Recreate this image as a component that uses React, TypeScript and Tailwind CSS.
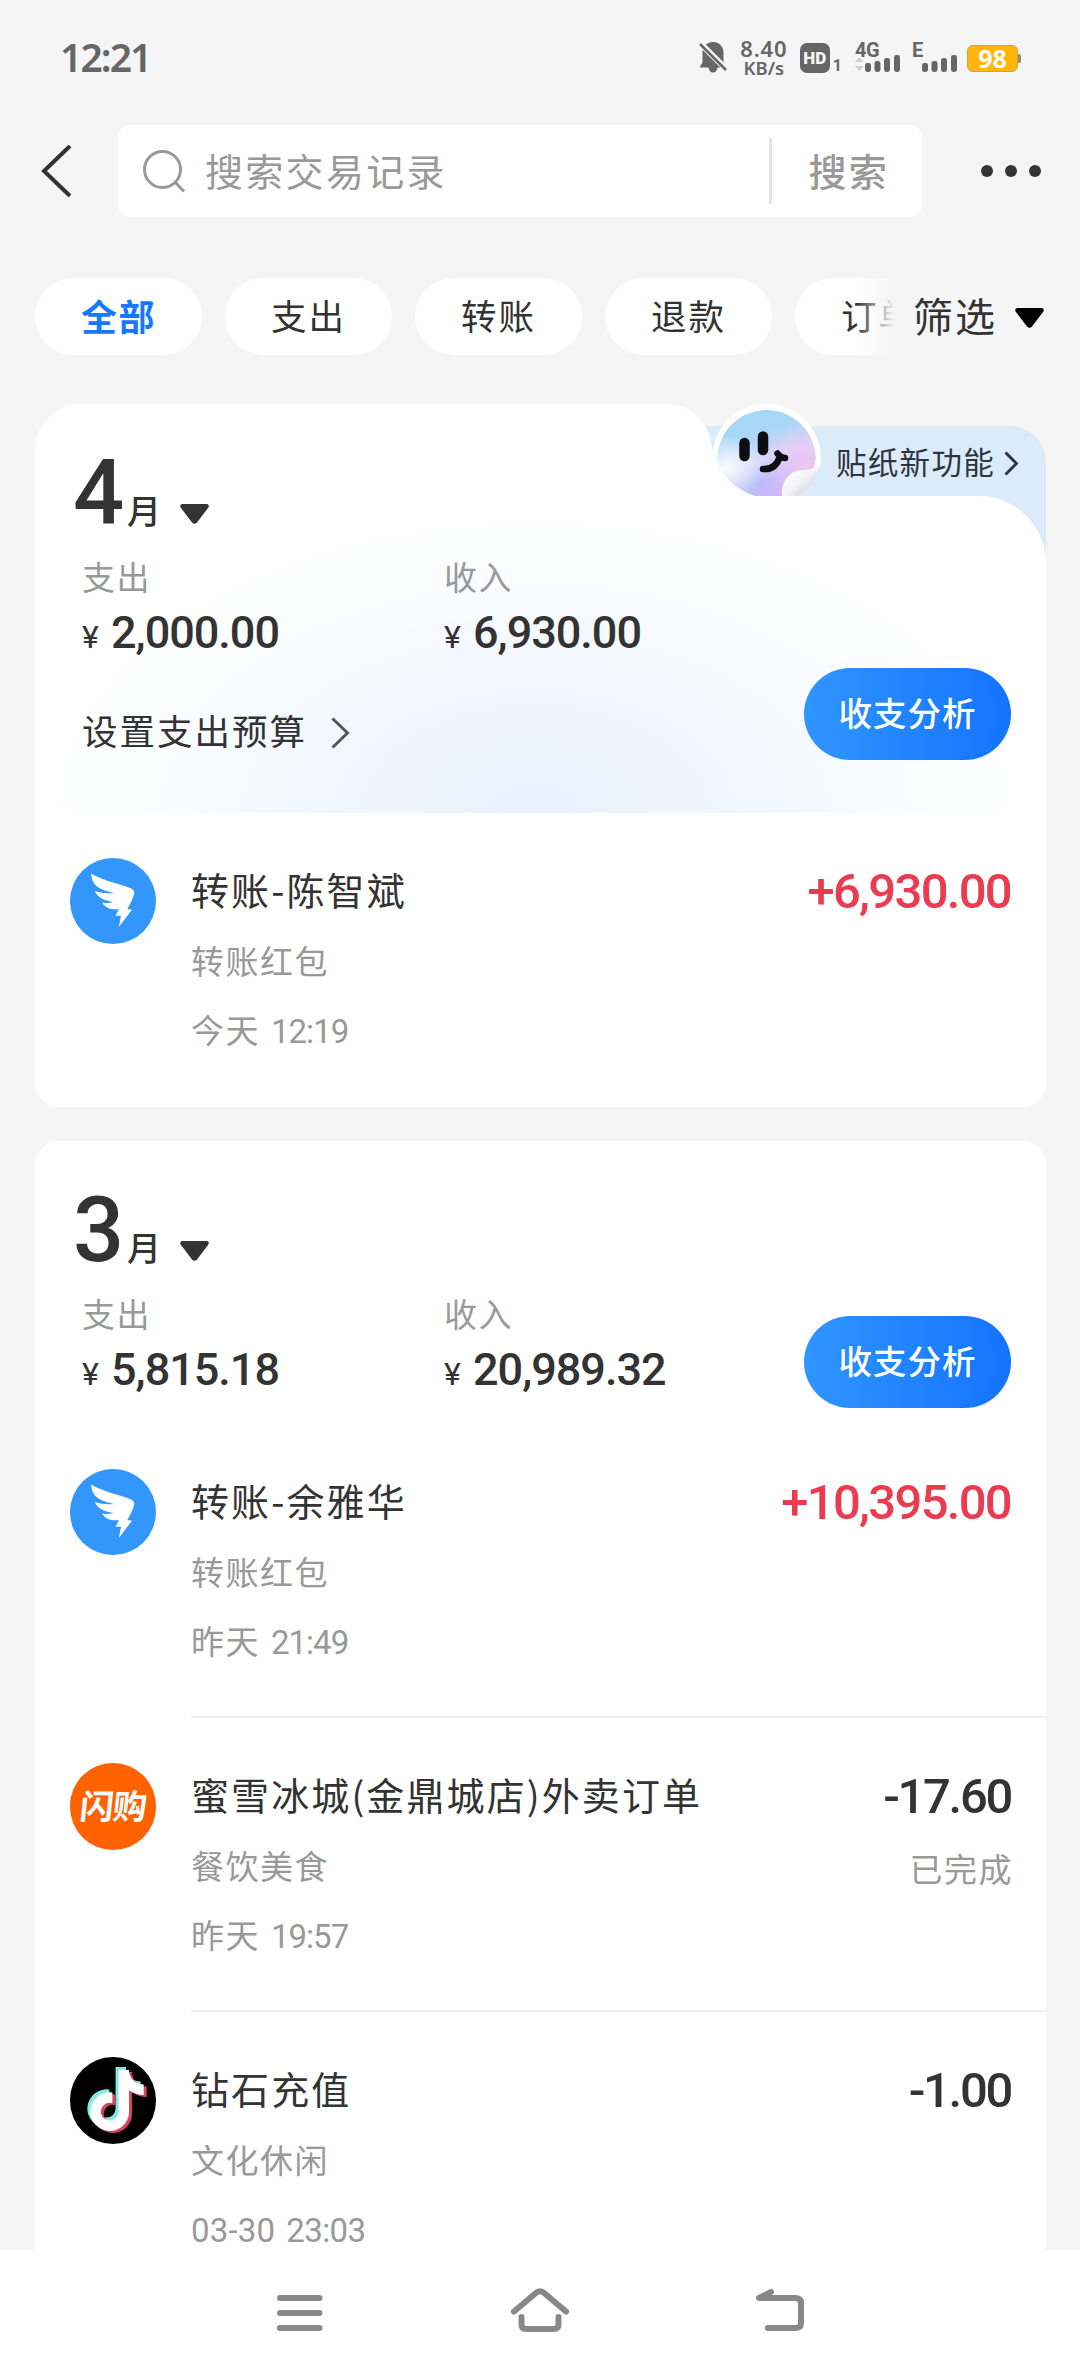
import React from 'react'
import { FaTiktok } from 'react-icons/fa6'

type Brand = 'dingtalk' | 'shangou' | 'douyin'

interface Bill {
  brand: Brand
  title: string
  category: string
  day: string
  time: string
  amount: string
  income?: boolean
  status?: string
}

const FILTERS = ['全部', '支出', '转账', '退款', '订单']

const APRIL: Bill[] = [
  { brand: 'dingtalk', title: '转账-陈智斌', category: '转账红包', day: '今天', time: '12:19', amount: '+6,930.00', income: true },
]

const MARCH: Bill[] = [
  { brand: 'dingtalk', title: '转账-余雅华', category: '转账红包', day: '昨天', time: '21:49', amount: '+10,395.00', income: true },
  { brand: 'shangou', title: '蜜雪冰城(金鼎城店)外卖订单', category: '餐饮美食', day: '昨天', time: '19:57', amount: '-17.60', status: '已完成' },
  { brand: 'douyin', title: '钻石充值', category: '文化休闲', day: '03-30', time: '23:03', amount: '-1.00' },
]

function Signal(): React.JSX.Element {
  return (
    <svg width="35" height="17" viewBox="0 0 35 17" fill="#666">
      <rect x="0" y="8" width="6" height="9" rx="2.4" />
      <rect x="9.5" y="6" width="6" height="11" rx="2.4" />
      <rect x="19" y="3" width="6" height="14" rx="2.4" />
      <rect x="29" y="0" width="6" height="17" rx="2.4" />
    </svg>
  )
}

function StatusBar(): React.JSX.Element {
  return (
    <div className="flex h-[114px] shrink-0 items-center pl-[60px] pr-[59px] text-[#666]">
      <span className="mb-[2px] font-['Noto_Sans','Roboto',sans-serif] text-[39px] font-semibold leading-none tracking-[-1.9px]">12:21</span>
      <div className="ml-auto flex h-[34px] items-end">
        <svg className="mb-px" width="28" height="32" viewBox="0 0 28 32">
          <path d="M14 1C20 1 24.500 5.500 24.500 11.500V21C24.500 23 27 24 27 26.500H18.500C18 29.500 16.500 31.500 14 31.500S10 29.500 9.500 26.500H1C1 24 3.500 23 3.500 21V11.500C3.500 5.500 8 1 14 1Z" fill="#666" />
          <path d="M0 1L28 29" stroke="#f5f5f5" strokeWidth="6" />
          <path d="M1 3L27 29" stroke="#666" strokeWidth="2.500" />
        </svg>
        <div className="mb-[-3px] ml-[13px] flex w-[48px] flex-col items-center font-['Noto_Sans',sans-serif] font-semibold">
          <span className="text-[22px] leading-[20px] tracking-[0.8px]">8.40</span>
          <span className="text-[18.5px] leading-[19px]">KB/s</span>
        </div>
        <span className="mb-px ml-[12px] flex h-[30px] w-[30px] items-center justify-center rounded-[7px] bg-[#666] font-['Roboto',sans-serif] text-[17px] font-black leading-none text-[#f5f5f5]">HD</span>
        <span className="ml-[3px] font-['Roboto',sans-serif] text-[16px] font-bold leading-[17px]">1</span>
        <div className="relative ml-[13px] flex h-[34px] w-[45px] items-end justify-end pb-[2px]">
          <span className="absolute left-0 top-[2px] font-['Roboto',sans-serif] text-[20px] font-bold leading-[16px] tracking-[-0.5px]">4G</span>
          <svg className="absolute bottom-[3px] left-0" width="9" height="14" viewBox="0 0 9 14" fill="#d0d0d0">
            <path d="M4.500 0L9 5H0ZM4.500 14L0 9H9Z" />
          </svg>
          <Signal />
        </div>
        <div className="relative ml-[12px] flex h-[34px] w-[45px] items-end justify-end pb-[2px]">
          <span className="absolute left-0 top-[2px] font-['Roboto',sans-serif] text-[20px] font-bold leading-[16px]">E</span>
          <Signal />
        </div>
        <span className="mb-[2px] ml-[10px] flex h-[27px] w-[51px] items-center justify-center rounded-[6px] border border-[#c9a24b] bg-[#ffb60a] font-['Noto_Sans',sans-serif] text-[25px] font-bold leading-none text-white">98</span>
        <span className="mb-[11px] h-[9px] w-[3px] rounded-r-[2px] bg-[#a08a5a]" />
      </div>
    </div>
  )
}

function SearchHeader(): React.JSX.Element {
  return (
    <div className="flex h-[114px] shrink-0 items-center pl-[40px]">
      <svg width="32" height="52" viewBox="0 0 32 52" fill="none">
        <path d="M30 1L4 26L30 51" stroke="#333" strokeWidth="4" />
      </svg>
      <div className="ml-[46px] flex h-[92px] w-[804px] items-center rounded-[13px] bg-white">
        <svg className="ml-[25px]" width="43" height="43" viewBox="0 0 43 43" fill="none" stroke="#999" strokeWidth="3">
          <circle cx="19.500" cy="19.500" r="18" />
          <path d="M32 32L41 41.500" />
        </svg>
        <span className="ml-[19px] pt-[3px] text-[38px] leading-[60px] tracking-[2.3px] text-[#999]">搜索交易记录</span>
        <span className="ml-auto h-[66px] w-[3px] bg-[#e5e5e5]" />
        <span className="ml-[36px] mr-[33px] pt-[4px] text-[38px] font-medium leading-[60px] tracking-[2.3px] text-[#999]">搜索</span>
      </div>
      <div className="ml-[59px] flex gap-[12px]">
        <i className="h-[12px] w-[12px] rounded-full bg-[#333]" />
        <i className="h-[12px] w-[12px] rounded-full bg-[#333]" />
        <i className="h-[12px] w-[12px] rounded-full bg-[#333]" />
      </div>
    </div>
  )
}

function Triangle({ className }: { className: string }): React.JSX.Element {
  return (
    <svg className={className} width="29" height="20" viewBox="0 0 29 20" fill="currentColor">
      <path d="M2 0H27Q30 1 28 4L17 18.500Q14.500 21 12 18.500L1 4Q-1 1 2 0Z" />
    </svg>
  )
}

function FilterBar(): React.JSX.Element {
  return (
    <div className="mt-[50px] flex h-[77px] shrink-0 items-center pl-[35px]">
      <div className="relative flex w-[860px] gap-[23px] overflow-hidden">
        {FILTERS.map((name, i) => (
          <span
            key={name}
            className={
              i === 0
                ? 'flex h-[77px] w-[167px] shrink-0 items-center justify-center rounded-full bg-white pt-[5px] text-[36px] font-bold tracking-[1.5px] text-[#1677ff]'
                : 'flex h-[77px] w-[167px] shrink-0 items-center justify-center rounded-full bg-white pt-[5px] text-[35.5px] tracking-[2px] text-[#333]'
            }
          >
            {name}
          </span>
        ))}
        <span className="absolute right-0 top-0 h-full w-[40px] bg-linear-to-r from-[#f5f5f5]/0 to-[#f5f5f5]" />
      </div>
      <span className="ml-[18px] pt-[5px] text-[40px] tracking-[2px] text-[#333]">筛选</span>
      <Triangle className="ml-[18px] mt-[2px] text-black" />
    </div>
  )
}

function StickerFace(): React.JSX.Element {
  return (
    <svg className="absolute left-[677px] top-0" width="112" height="92" viewBox="0 0 112 92">
      <defs>
        <linearGradient id="foil" x1="0.25" y1="0" x2="0.6" y2="1">
          <stop offset="0" stopColor="#a2daf3" />
          <stop offset="0.3" stopColor="#abd6f8" />
          <stop offset="0.58" stopColor="#d5d8fa" />
          <stop offset="0.8" stopColor="#b7bef9" />
          <stop offset="1" stopColor="#cbb6f6" />
        </linearGradient>
        <radialGradient id="pink" cx="0.9" cy="0.65" r="0.5">
          <stop offset="0" stopColor="#f0c6f2" />
          <stop offset="1" stopColor="#f0c6f2" stopOpacity="0" />
        </radialGradient>
        <radialGradient id="sheen" cx="0.08" cy="0.68" r="0.4">
          <stop offset="0" stopColor="#fff" stopOpacity="0.9" />
          <stop offset="1" stopColor="#fff" stopOpacity="0" />
        </radialGradient>
        <linearGradient id="curl" x1="0.1" y1="0.2" x2="0.8" y2="0.9">
          <stop offset="0" stopColor="#fff" />
          <stop offset="0.5" stopColor="#f4f4f8" />
          <stop offset="1" stopColor="#cfd4e2" />
        </linearGradient>
      </defs>
      <path d="M0 48H40V92H0Z" fill="#fff" />
      <path d="M54.500 0A54.500 54.500 0 0 1 109 54.500Q109 62 106 66L86 92H20Q1 78 0 54.500A54.500 54.500 0 0 1 54.500 0Z" fill="#fff" />
      <g>
        <path d="M54.500 6A49 49 0 0 1 103.500 55L101 68L70 92H43Q12 81 5.500 55A49 49 0 0 1 54.500 6Z" fill="url(#foil)" />
        <path d="M54.500 6A49 49 0 0 1 103.500 55L101 68L70 92H43Q12 81 5.500 55A49 49 0 0 1 54.500 6Z" fill="url(#pink)" />
        <path d="M54.500 6A49 49 0 0 1 103.500 55L101 68L70 92H43Q12 81 5.500 55A49 49 0 0 1 54.500 6Z" fill="url(#sheen)" />
      </g>
      <path d="M70 92C69 76 78 66 92 66Q102 66 108 60Q104 78 86 92Z" fill="url(#curl)" />
      <g stroke="#0b0f12" strokeLinecap="round" fill="none">
        <path d="M32.500 39V52M51 32.500V46" strokeWidth="10.500" />
        <path d="M51 65Q64 66 68 52" strokeWidth="6.500" />
        <path d="M65.500 49.500Q68 54 73 54" strokeWidth="6.500" />
      </g>
    </svg>
  )
}

function BrandIcon({ brand }: { brand: Brand }): React.JSX.Element {
  if (brand === 'shangou') {
    return (
      <span className="flex h-[87px] w-[86px] items-center justify-center rounded-full bg-[#ff6200]">
        <span className="-skew-x-6 text-[34px] font-bold leading-none tracking-[-1px] text-white">闪购</span>
      </span>
    )
  }
  if (brand === 'douyin') {
    return (
      <span className="relative block h-[87px] w-[86px] rounded-full bg-black">
        <FaTiktok className="absolute left-[17px] top-[10px] h-[61px] w-[54px] text-[#7fe9e2]" />
        <FaTiktok className="absolute left-[23px] top-[15px] h-[61px] w-[54px] text-[#d9415f]" />
        <FaTiktok className="absolute left-[20px] top-[12.5px] h-[61px] w-[54px] text-white" />
      </span>
    )
  }
  return (
    <svg width="86" height="86" viewBox="0 0 86 86">
      <circle cx="43" cy="43" r="43" fill="#3296fa" />
      <path
        d="M21 15.500C33 22.500 48 25.500 60 30C63.500 31.500 65 33 64 36.500C62.500 41.500 60 46.500 57.300 51L62 51.700L48.800 69L51 57.800H45.500L49 51C42 52 35.500 50.500 32 44.500C36 45.500 40 45 43.500 43.800C36 43 28 40.500 24.700 33C31 35 37 35.500 44 35C34 32.500 22.500 30 21.300 17Z"
        fill="#fff"
      />
    </svg>
  )
}

function BillRow({ bill, divider }: { bill: Bill; divider: boolean }): React.JSX.Element {
  return (
    <div className="flex h-[294px] shrink-0 pl-[35px]">
      <div className="mt-[45px] w-[86px] shrink-0">
        <BrandIcon brand={bill.brand} />
      </div>
      <div className={divider ? 'ml-[35px] flex flex-1 justify-between border-b-2 border-[#eee] pr-[35px] pt-[48px]' : 'ml-[35px] flex flex-1 justify-between pr-[35px] pt-[48px]'}>
        <div className="flex flex-col">
          <span className="font-['Noto_Sans_CJK_SC',sans-serif] text-[38px] leading-[56px] tracking-[2.1px] text-[#333]">{bill.title}</span>
          <span className="mt-[20px] text-[33px] leading-[52px] tracking-[1.5px] text-[#999]">{bill.category}</span>
          <span className="mt-[17px] flex gap-[11px] text-[33px] leading-[52px] text-[#999]">
            <span className={bill.day.includes('-') ? 'tracking-[0.2px]' : 'tracking-[1.5px]'}>{bill.day}</span>
            <span className={bill.day.includes('-') ? 'tracking-[-0.6px]' : 'tracking-[-1px]'}>{bill.time}</span>
          </span>
        </div>
        <div className="flex flex-col items-end">
          <span className={bill.income ? 'mt-px text-[49px] font-medium leading-[60px] tracking-[-1.7px] text-[#eb3b50]' : 'mt-px text-[49px] font-medium leading-[60px] tracking-[-2.3px] text-[#333]'}>
            {bill.amount}
          </span>
          {bill.status && <span className="mr-[-2px] mt-[18px] text-[33px] leading-[52px] tracking-[1.5px] text-[#999]">{bill.status}</span>}
        </div>
      </div>
    </div>
  )
}

function Total({ label, value }: { label: string; value: string }): React.JSX.Element {
  return (
    <div className="w-[362px] shrink-0">
      <div className="text-[33px] leading-[48px] tracking-[1.5px] text-[#999]">{label}</div>
      <div className="mt-[6px] flex items-baseline text-[#333]">
        <span className="w-[29px] text-[32px] leading-[48px]">¥</span>
        <span className="text-[45px] font-medium leading-[48px] tracking-[-1px]">{value}</span>
      </div>
    </div>
  )
}

function AnalysisButton({ className }: { className: string }): React.JSX.Element {
  return (
    <button className={className}>
      <span className="flex h-[92px] w-[207px] items-center justify-center rounded-full bg-linear-to-r from-[#3095ff] to-[#1473ff] pt-[3px] text-[33.5px] font-medium tracking-[1px] text-white">收支分析</span>
    </button>
  )
}

function MonthTitle({ month }: { month: string }): React.JSX.Element {
  return (
    <div className="flex h-[64px] items-end pl-[38px] text-[#333]">
      <span className="mb-[-3px] w-[50px] text-[90px] font-medium leading-[66px]">{month}</span>
      <span className="mb-[-5px] ml-[4px] text-[34px] font-medium leading-[34px]">月</span>
      <Triangle className="ml-[19px]" />
    </div>
  )
}

function NavBar(): React.JSX.Element {
  return (
    <div className="flex h-[126px] shrink-0 items-center justify-between bg-white px-[275px]">
      <svg width="50" height="44" viewBox="0 0 50 44" stroke="#888" strokeWidth="6" strokeLinecap="round">
        <path d="M5 7H44.500M5 22H44.500M5 37H44.500" />
      </svg>
      <svg className="mb-[6px]" width="60" height="46" viewBox="0 0 60 46" fill="none" stroke="#888" strokeWidth="6" strokeLinecap="round" strokeLinejoin="round">
        <path d="M4 24.500L26.500 5.500Q30 3 33.500 5.500L56 24.500" />
        <path d="M11.500 30V37Q11.500 42 16 42H44Q48.500 42 48.500 37V30" />
      </svg>
      <svg className="mb-[6px]" width="50" height="44" viewBox="0 0 50 44" fill="none" stroke="#888" strokeWidth="6" strokeLinecap="round" strokeLinejoin="round">
        <path d="M16 4L4 10H40Q46 10 46 15V35Q46 40 40 40H13" />
      </svg>
    </div>
  )
}

export default function App(): React.JSX.Element {
  return (
    <div className="flex h-[2376px] w-[1080px] flex-col overflow-hidden bg-[#f5f5f5] font-['Roboto','Noto_Sans_CJK_SC',sans-serif]">
      <StatusBar />
      <SearchHeader />
      <FilterBar />

      <div className="mt-[49px] flex min-h-0 flex-1 flex-col gap-[34px] overflow-hidden px-[35px]">
        <section className="relative flex h-[703px] w-[1011px] shrink-0 flex-col">
          {/* sticker promo sits behind the folder-shaped card */}
          <div className="absolute right-0 top-[22px] flex h-[140px] w-[376px] rounded-tr-[36px] bg-[#dcebf9] pl-[166px]">
            <span className="mt-[16px] h-[44px] text-[30.5px] leading-[44px] tracking-[1.3px] text-[#2c3540]">贴纸新功能</span>
            <svg className="ml-[9px] mt-[25px]" width="15" height="25" viewBox="0 0 15 25" fill="none" stroke="#2c3540" strokeWidth="3">
              <path d="M1.500 1.500L12.500 12.500L1.500 23.500" />
            </svg>
          </div>
          <div className="relative z-10 h-[92px] w-[677px] shrink-0 rounded-tl-[46px] rounded-tr-[46px] bg-white pt-[56px]">
            <MonthTitle month="4" />
          </div>
          <StickerFace />
          <div className="relative flex flex-1 flex-col overflow-hidden rounded-b-[24px] rounded-tr-[68px] bg-white">
            <div className="h-[317px] shrink-0 bg-[radial-gradient(490px_300px_at_500px_100%,#e9f2fd_0%,#eff6fe_40%,#f8fbff_70%,#ffffff_100%)] pl-[47px] pt-[59px]">
              <div className="flex">
                <Total label="支出" value="2,000.00" />
                <Total label="收入" value="6,930.00" />
              </div>
              <div className="mt-[46px] flex items-center text-[35.500px] leading-[52px] tracking-[2px] text-[#333]">
                设置支出预算
                <svg className="ml-[24px]" width="19" height="32" viewBox="0 0 19 32" fill="none" stroke="#555" strokeWidth="3">
                  <path d="M1.500 1.500L16.500 16L1.500 30.500" />
                </svg>
              </div>
            </div>
            {APRIL.map((bill) => (
              <BillRow key={bill.title} bill={bill} divider={false} />
            ))}
          </div>
          <AnalysisButton className="absolute right-[35px] top-[264px]" />
        </section>

        <section className="relative flex w-[1011px] shrink-0 flex-col rounded-t-[24px] bg-white pt-[56px]">
          <MonthTitle month="3" />
          <div className="flex h-[163px] shrink-0 pl-[47px] pt-[31px]">
            <Total label="支出" value="5,815.18" />
            <Total label="收入" value="20,989.32" />
            <AnalysisButton className="mb-auto ml-[-2px] mt-[24px]" />
          </div>
          {MARCH.map((bill, i) => (
            <BillRow key={bill.title} bill={bill} divider={i < MARCH.length - 1} />
          ))}
        </section>
      </div>

      <NavBar />
    </div>
  )
}
